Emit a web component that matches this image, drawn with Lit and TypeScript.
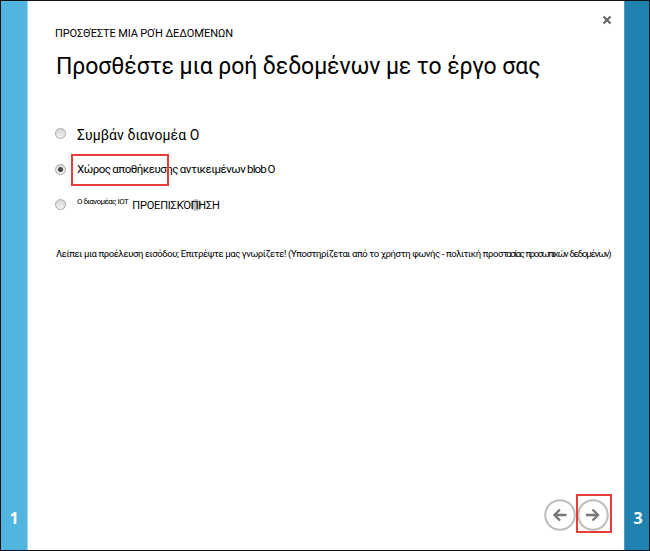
import { LitElement, html, css, svg } from "lit";
import { customElement } from "lit/decorators.js";

@customElement("app-root")
export class AppRoot extends LitElement {
  static styles = css`
    :host {
      display: block;
      height: 551px;
      font-family: Roboto, "Noto Sans", sans-serif;
      color: #000;
    }
    * { box-sizing: border-box; }
    .dialog {
      display: grid;
      grid-template-columns: 27px 1fr 25px;
      width: 650px;
      height: 551px;
      border: 1px solid #111;
      background: #fff;
      white-space: nowrap;
    }
    .step {
      display: flex;
      align-items: flex-end;
      justify-content: center;
      padding-bottom: 22px;
      color: #fff;
      font: bold 16px/20px "Open Sans", sans-serif;
    }
    .prev { background: #52b5e0; border-right: 1px solid #a5d8ef; }
    .next { background: #1f82b0; border-left: 1px solid #4a9cc0; padding-left: 2px; }
    .content {
      display: flex;
      flex-direction: column;
      padding: 11px 12px 19px 27px;
      min-width: 0;
    }
    .top { display: flex; justify-content: space-between; height: 30px; }
    .crumb { padding-top: 14px; font-size: 11px; line-height: 16px; letter-spacing: -0.13px; }
    .close { width: 10px; height: 10px; margin-top: 3px; }
    h1 { margin: 8px 0 0 1px; height: 34px; font-size: 23px; line-height: 34px; font-weight: 400; letter-spacing: -0.08px; }
    .options { margin-top: 39px; }
    .option { display: flex; align-items: center; height: 20px; gap: 11px; }
    .option + .option { margin-top: 16px; }
    .option:last-child .radio { margin-bottom: 2px; }
    .radio {
      width: 11px; height: 11px; flex: none;
      border: 1px solid #aaa; border-radius: 50%;
      background: linear-gradient(#d8d8d8, #f0f0f0);
      display: grid; place-items: center;
    }
    .dot { width: 5px; height: 5px; border-radius: 50%; background: #444; }
    .label { position: relative; line-height: 20px; }
    .hub { font-size: 14px; top: 2px; letter-spacing: 0.05px; }
    .blob { font-size: 11.5px; letter-spacing: -0.5px; word-spacing: -0.5px; }
    .blob-word { letter-spacing: -0.9px; }
    .frame { position: absolute; border: 2px solid #e53e39; }
    .blob-frame { left: -6px; top: -5px; width: 98px; height: 32px; }
    .iot { display: flex; gap: 4px; }
    .small { font-size: 8px; line-height: 14px; letter-spacing: -0.55px; }
    .preview { font-size: 11px; letter-spacing: -0.2px; line-height: 21px; position: relative; }
    .info {
      position: absolute; left: 58px; top: 4px; width: 12px; height: 12px;
      border-radius: 50%; background: #c4c4c4;
    }
    .caps { position: relative; }
    .note { margin: 31px 0 0 1px; font-size: 9.5px; line-height: 16px; letter-spacing: -0.39px; }
    .tight { letter-spacing: -1.45px; word-spacing: 1.3px; }
    .last { letter-spacing: -1.1px; }
    .nav { display: flex; justify-content: flex-end; margin-top: auto; margin-right: 3px; gap: 1px; }
    .button { position: relative; width: 32px; height: 32px; }
    .button svg, .close svg { display: block; }
    .next-frame { left: -1px; top: -5px; width: 36px; height: 39px; }
  `;

  private arrow(back: boolean) {
    const path = back
      ? svg`<path d="M22.5 16H11M16 10.5L10.5 16L16 21.5"/>`
      : svg`<path d="M9 16H21M15.5 10.5L21 16L15.5 21.5"/>`;
    return html`<svg width="32" height="32" fill="none" stroke="#777" stroke-width="2.4">
      <circle cx="16" cy="16" r="14.8" stroke="#bdbdbd" stroke-width="2" />${path}
    </svg>`;
  }

  render() {
    return html`
      <div class="dialog">
        <div class="step prev">1</div>
        <div class="content">
          <div class="top">
            <div class="crumb">ΠΡΟΣΘΈΣΤΕ ΜΙΑ ΡΟΉ ΔΕΔΟΜΈΝΩΝ</div>
            <div class="close">
              <svg width="10" height="10" stroke="#666" stroke-width="2.2"><path d="M1.5 1.5L8.5 8.5M8.5 1.5L1.5 8.5" /></svg>
            </div>
          </div>
          <h1>Προσθέστε μια ροή δεδομένων με το έργο σας</h1>
          <div class="options">
            <div class="option"><span class="radio"></span><span class="label hub">Συμβάν διανομέα Ο</span></div>
            <div class="option">
              <span class="radio"><span class="dot"></span></span>
              <span class="label blob">Χώρος αποθήκευσης αντικειμένων <span class="blob-word">blob</span> Ο<span class="frame blob-frame"></span></span>
            </div>
            <div class="option">
              <span class="radio"></span>
              <span class="label iot"><span class="small">Ο διανομέας ΙΟΤ</span><span class="preview"><span class="info"></span><span class="caps">ΠΡΟΕΠΙΣΚΌΠΗΣΗ</span></span></span>
            </div>
          </div>
          <div class="note">Λείπει μια προέλευση εισόδου; Επιτρέψτε μας γνωρίζετε! (Υποστηρίζεται από το χρήστη φωνής - πολιτική προσ<span class="tight">τασίας προσωπικών <span class="last">δεδομένων)</span></span></div>
          <div class="nav">
            <div class="button">${this.arrow(true)}</div>
            <div class="button">${this.arrow(false)}<span class="frame next-frame"></span></div>
          </div>
        </div>
        <div class="step next">3</div>
      </div>
    `;
  }
}
